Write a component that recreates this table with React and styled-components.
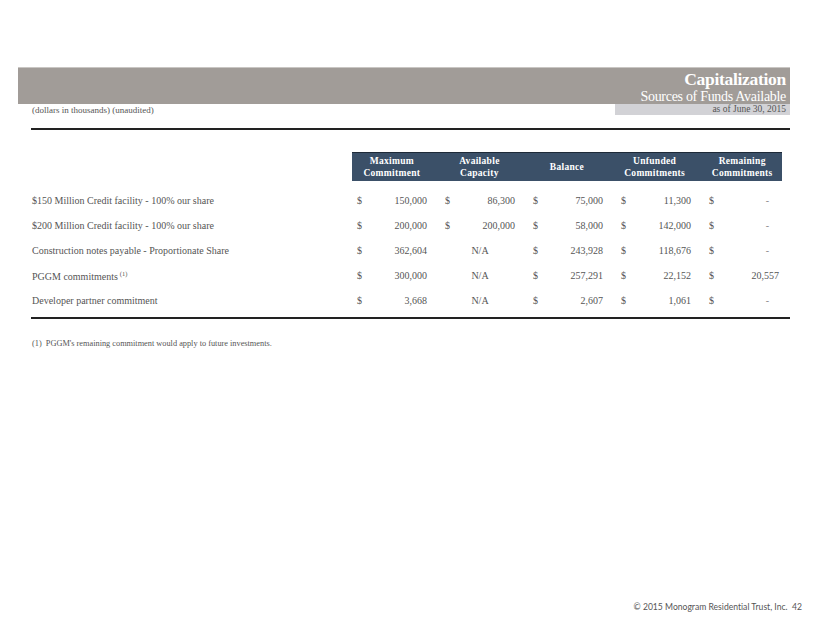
import React from 'react';
import styled, { createGlobalStyle } from 'styled-components';

const GlobalStyle = createGlobalStyle`
  html, body {
    margin: 0;
    padding: 0;
    background: #ffffff;
  }
  body {
    font-family: "Liberation Serif", "Times New Roman", serif;
  }
`;

const rows = [
  { label: '$150 Million Credit facility - 100% our share', values: ['150,000', '86,300', '75,000', '11,300', '-'] },
  { label: '$200 Million Credit facility - 100% our share', values: ['200,000', '200,000', '58,000', '142,000', '-'] },
  { label: 'Construction notes payable - Proportionate Share', values: ['362,604', 'N/A', '243,928', '118,676', '-'] },
  { label: 'PGGM commitments', note: '(1)', values: ['300,000', 'N/A', '257,291', '22,152', '20,557'] },
  { label: 'Developer partner commitment', values: ['3,668', 'N/A', '2,607', '1,061', '-'] },
];

const headings = [
  ['Maximum', 'Commitment'],
  ['Available', 'Capacity'],
  ['Balance'],
  ['Unfunded', 'Commitments'],
  ['Remaining', 'Commitments'],
];

const Page = styled.div`
  position: relative;
  width: 822px;
  height: 635px;
  overflow: hidden;
  display: flex;
  flex-direction: column;
  padding-top: 67px;
  box-sizing: border-box;
  color: #555;
`;

const TitleBand = styled.div`
  margin-left: 18px;
  width: 772px;
  height: 37px;
  box-sizing: border-box;
  background: #a19c98;
  border-top: 1px solid #c9c6c3;
  color: #ffffff;
  text-align: right;
  padding: 2px 4px 0 0;
  display: flex;
  flex-direction: column;
  align-items: flex-end;
  gap: 2px;
`;

const Title = styled.div`
  font-size: 17.5px;
  font-weight: 700;
  line-height: 18px;
  letter-spacing: -0.3px;
`;

const Subtitle = styled.div`
  font-size: 14px;
  line-height: 14px;
  letter-spacing: -0.3px;
`;

const SubRow = styled.div`
  display: flex;
  justify-content: space-between;
  align-items: flex-start;
  margin-left: 18px;
  width: 772px;
`;

const Units = styled.div`
  margin-left: 14px;
  font-size: 9px;
  line-height: 12px;
  color: #555;
`;

const DateBox = styled.div`
  width: 175px;
  height: 11px;
  background: #d2d2d6;
  text-align: right;
  padding-right: 4px;
  box-sizing: border-box;
  font-size: 9.5px;
  line-height: 11px;
  color: #555;
`;

const Rule = styled.div`
  margin-left: 31px;
  width: 759px;
  height: 2px;
  background: #222;
  margin-top: ${p => p.$top}px;
`;

const HeadBar = styled.div`
  margin-top: 22px;
  margin-left: 352px;
  width: 430px;
  height: 29px;
  box-sizing: border-box;
  background: #3b5068;
  border-top: 1px solid #1e2a38;
`;

const HeadGrid = styled.div`
  display: grid;
  grid-template-columns: repeat(5, 1fr);
  margin: 0 -4px 0 -4px;
  height: 100%;
`;

const HeadCell = styled.div`
  display: flex;
  flex-direction: column;
  justify-content: center;
  align-items: center;
  color: #ffffff;
  font-weight: 700;
  font-size: 9.5px;
  line-height: 12px;
  letter-spacing: 0.3px;
  padding-bottom: 1px;
`;

const Body = styled.div`
  margin-top: 7px;
  margin-left: 32px;
  display: flex;
  flex-direction: column;
`;

const Row = styled.div`
  display: grid;
  grid-template-columns: 320px repeat(5, 88px);
  height: 25px;
  align-items: center;
  font-size: 10px;
  color: #555;
`;

const Label = styled.div`
  white-space: nowrap;
`;

const Note = styled.sup`
  font-size: 6.5px;
  margin-left: 2px;
  vertical-align: 4px;
`;

const Cell = styled.div`
  display: flex;
  justify-content: ${p => (p.$na ? 'center' : 'space-between')};
  padding: 0 13px 0 5px;
  white-space: nowrap;
`;

const Amount = styled.span`
  margin-right: ${p => (p.$dash ? 10 : 0)}px;
  color: ${p => (p.$dash ? '#888' : 'inherit')};
`;

const Footnote = styled.div`
  margin-top: 20px;
  margin-left: 32px;
  font-size: 8.3px;
  color: #555;
`;

const Footer = styled.div`
  position: absolute;
  right: 20px;
  bottom: 23px;
  font-family: Lato, "Open Sans", sans-serif;
  font-size: 8.6px;
  font-variant-ligatures: none;
  color: #555;
  white-space: pre;
`;

const ValueCell = ({ value }) => {
  if (value === 'N/A') {
    return <Cell $na>N/A</Cell>;
  }
  return (
    <Cell>
      <span>$</span>
      <Amount $dash={value === '-'}>{value}</Amount>
    </Cell>
  );
};

export default function App() {
  return (
    <>
      <GlobalStyle />
      <Page>
        <TitleBand>
          <Title>Capitalization</Title>
          <Subtitle>Sources of Funds Available</Subtitle>
        </TitleBand>
        <SubRow>
          <Units>(dollars in thousands) (unaudited)</Units>
          <DateBox>as of June 30, 2015</DateBox>
        </SubRow>
        <Rule $top={12} />
        <HeadBar>
          <HeadGrid>
            {headings.map((lines, i) => (
              <HeadCell key={i}>
                {lines.map(l => (
                  <span key={l}>{l}</span>
                ))}
              </HeadCell>
            ))}
          </HeadGrid>
        </HeadBar>
        <Body>
          {rows.map(r => (
            <Row key={r.label}>
              <Label>
                {r.label}
                {r.note && <Note>{r.note}</Note>}
              </Label>
              {r.values.map((v, i) => (
                <ValueCell key={i} value={v} />
              ))}
            </Row>
          ))}
        </Body>
        <Rule $top={4} />
        <Footnote>(1)&nbsp; PGGM's remaining commitment would apply to future investments.</Footnote>
        <Footer>{'© 2015 Monogram Residential Trust, Inc.  42'}</Footer>
      </Page>
    </>
  );
}
